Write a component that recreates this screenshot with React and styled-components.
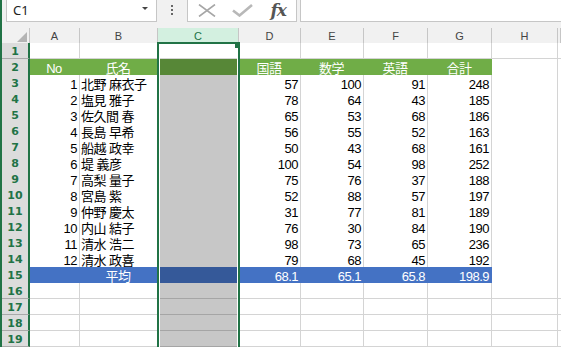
import React from 'react';
import styled, { createGlobalStyle } from 'styled-components';

const GlobalStyle = createGlobalStyle`
  html, body {
    margin: 0;
    padding: 0;
    background: #ffffff;
    overflow: hidden;
  }
`;

const GREEN = '#70ad47';
const BLUE = '#4472c4';
const EXCEL = '#217346';
const GRID = '#d4d4d4';
const CHROME = '#f1f1f1';

const columns = [
  { name: 'A', width: 50 },
  { name: 'B', width: 78 },
  { name: 'C', width: 81 },
  { name: 'D', width: 62 },
  { name: 'E', width: 63 },
  { name: 'F', width: 64 },
  { name: 'G', width: 64 },
  { name: 'H', width: 66 },
  { name: 'I', width: 0 },
];

const template = `28px ${columns
  .slice(0, -1)
  .map((c) => `${c.width}px`)
  .join(' ')} 1fr`;

const students = [
  [1, '北野 麻衣子', 57, 100, 91, 248],
  [2, '塩見 雅子', 78, 64, 43, 185],
  [3, '佐久間 春', 65, 53, 68, 186],
  [4, '長島 早希', 56, 55, 52, 163],
  [5, '船越 政幸', 50, 43, 68, 161],
  [6, '堤 義彦', 100, 54, 98, 252],
  [7, '高梨 量子', 75, 76, 37, 188],
  [8, '宮島 紫', 52, 88, 57, 197],
  [9, '仲野 慶太', 31, 77, 81, 189],
  [10, '内山 結子', 76, 30, 84, 190],
  [11, '清水 浩二', 98, 73, 65, 236],
  [12, '清水 政喜', 79, 68, 45, 192],
];

const Window = styled.div`
  height: 100vh;
  border-left: 2px solid ${EXCEL};
  display: flex;
  flex-direction: column;
  overflow: hidden;
  background: #fff;
`;

const FormulaBar = styled.div`
  display: flex;
  height: 22px;
  background: ${CHROME};
`;

const NameBox = styled.div`
  margin-left: 4px;
  width: 151px;
  height: 22px;
  box-sizing: border-box;
  border: 1px solid #c6c6c6;
  border-top: none;
  background: #fff;
  display: flex;
  justify-content: space-between;
  padding: 0 8px 0 6px;
  font-family: 'Noto Sans', sans-serif;
  font-size: 13px;
  line-height: 21px;
  color: #222;
`;

const DropArrow = styled.span`
  margin-top: 7px;
  width: 0;
  height: 0;
  border-left: 3px solid transparent;
  border-right: 3px solid transparent;
  border-top: 3px solid #444;
`;

const BarDots = styled.div`
  width: 30px;
  display: flex;
  flex-direction: column;
  align-items: center;
  gap: 2px;
  padding-top: 5px;
  box-sizing: border-box;

  span {
    width: 2px;
    height: 2px;
    background: #666;
  }
`;

const ButtonBox = styled.div`
  width: 110px;
  height: 22px;
  box-sizing: border-box;
  border: 1px solid #c6c6c6;
  border-top: none;
  background: #fff;
  display: flex;
  padding-left: 1px;
`;

const IconSlot = styled.div`
  width: 36px;
  display: flex;
  align-items: center;
  justify-content: center;
`;

const FxLabel = styled.span`
  font-family: 'DejaVu Serif', 'Liberation Serif', serif;
  font-style: italic;
  font-weight: bold;
  font-size: 17px;
  letter-spacing: -1px;
  color: #555;
  line-height: 21px;
  margin-top: -1px;
`;

const FormulaInput = styled.div`
  flex: 1;
  margin-left: 3px;
  height: 22px;
  box-sizing: border-box;
  border: 1px solid #c6c6c6;
  border-top: none;
  border-right: none;
  background: #fff;
`;

const Gap = styled.div`
  height: 10px;
  background: ${CHROME};
`;

const Sheet = styled.div`
  position: relative;
  flex: 1;
`;

const Row = styled.div`
  display: grid;
  grid-template-columns: ${template};
  height: ${(p) => p.$height || 16}px;
`;

const Corner = styled.div`
  background: ${CHROME};
  border-right: 1px solid #c6c6c6;
  border-bottom: 1px solid #bdbdbd;
  display: flex;
  align-items: flex-end;
  justify-content: flex-end;
  padding: 0 2px 2px 0;
`;

const ColHead = styled.div`
  box-sizing: border-box;
  background: ${(p) => (p.$active ? '#d3f0e0' : CHROME)};
  border-right: 1px solid #c6c6c6;
  border-bottom: ${(p) => (p.$active ? `2px solid ${EXCEL}` : '1px solid #bdbdbd')};
  color: ${(p) => (p.$active ? EXCEL : '#444')};
  font-family: 'Liberation Sans', Arial, sans-serif;
  font-size: 11px;
  line-height: 14px;
  padding-top: 1px;
  text-align: center;
`;

const RowHead = styled.div`
  box-sizing: border-box;
  background: #dcdcdc;
  border-right: 2px solid ${EXCEL};
  border-bottom: 1px solid #a9a9a9;
  color: ${EXCEL};
  font-family: 'DejaVu Sans', sans-serif;
  font-weight: bold;
  font-size: 11px;
  line-height: 12px;
  padding-top: 3px;
  text-align: center;
`;

const Cell = styled.div`
  position: relative;
  box-sizing: border-box;
  background: ${(p) => p.$fill || '#fff'};
  border-right: 1px solid ${(p) => p.$fill || GRID};
  border-bottom: 1px solid ${(p) => p.$fill || GRID};
  color: ${(p) => (p.$fill ? '#fff' : '#000')};
  font-family: 'Liberation Sans', 'Noto Sans CJK JP', sans-serif;
  font-size: 13px;
  letter-spacing: -0.5px;
  line-height: 13px;
  padding: 3px 2px 0 1px;
  text-align: ${(p) => p.$align || 'left'};
  white-space: nowrap;

  &::after {
    content: '';
    display: ${(p) => (p.$shade ? 'block' : 'none')};
    position: absolute;
    top: 0;
    left: 0;
    right: -1px;
    bottom: -1px;
    background: rgba(0, 0, 0, 0.22);
  }
`;

const Selection = styled.div`
  position: absolute;
  left: 155px;
  top: 14px;
  width: 83px;
  bottom: -20px;
  box-sizing: border-box;
  border: 2px solid ${EXCEL};
  box-shadow: inset 0 0 0 1px #fff;
  pointer-events: none;
`;

const FillHandle = styled.div`
  position: absolute;
  left: 76px;
  top: -1px;
  width: 5px;
  height: 5px;
  background: ${EXCEL};
`;

const CloseIcon = () => (
  <svg width="18" height="13" viewBox="0 0 18 13">
    <path d="M1 0.5 L17 12.5 M17 0.5 L1 12.5" stroke="#a6a6a6" strokeWidth="1.6" fill="none" />
  </svg>
);

const CheckIcon = () => (
  <svg width="21" height="13" viewBox="0 0 21 13">
    <path d="M1 6.5 L7.5 11.5 L20 1" stroke="#b8b8b8" strokeWidth="2.6" fill="none" />
  </svg>
);

const CornerTriangle = () => (
  <svg width="10" height="10" viewBox="0 0 10 10">
    <polygon points="10,0 10,10 0,10" fill="#b4b4b4" />
  </svg>
);

const DataRow = ({ index, cells }) => (
  <Row>
    <RowHead>{index}</RowHead>
    {cells.map((c, i) => (
      <Cell key={i} $align={c.align} $fill={c.fill} $shade={c.shade}>
        {c.text}
      </Cell>
    ))}
  </Row>
);

const blank = (n) => Array.from({ length: n }, () => ({}));

const buildRows = () => {
  const rows = [];
  rows.push(blank(9));
  rows.push([
    { text: 'No', align: 'center', fill: GREEN },
    { text: '氏名', align: 'center', fill: GREEN },
    { fill: GREEN },
    { text: '国語', align: 'center', fill: GREEN },
    { text: '数学', align: 'center', fill: GREEN },
    { text: '英語', align: 'center', fill: GREEN },
    { text: '合計', align: 'center', fill: GREEN },
    {},
    {},
  ]);
  students.forEach(([no, name, a, b, c, total]) => {
    rows.push([
      { text: no, align: 'right' },
      { text: name },
      {},
      { text: a, align: 'right' },
      { text: b, align: 'right' },
      { text: c, align: 'right' },
      { text: total, align: 'right' },
      {},
      {},
    ]);
  });
  rows.push([
    { fill: BLUE },
    { text: '平均', align: 'center', fill: BLUE },
    { fill: BLUE },
    { text: '68.1', align: 'right', fill: BLUE },
    { text: '65.1', align: 'right', fill: BLUE },
    { text: '65.8', align: 'right', fill: BLUE },
    { text: '198.9', align: 'right', fill: BLUE },
    {},
    {},
  ]);
  for (let i = 0; i < 4; i++) rows.push(blank(9));
  // column C is selected: every cell but the active one is shaded
  return rows.map((r, i) => r.map((c, j) => (j === 2 && i > 0 ? { ...c, shade: true } : c)));
};

const App = () => {
  const rows = buildRows();
  return (
    <>
      <GlobalStyle />
      <Window>
        <FormulaBar>
          <NameBox>
            C1
            <DropArrow />
          </NameBox>
          <BarDots>
            <span />
            <span />
            <span />
          </BarDots>
          <ButtonBox>
            <IconSlot>
              <CloseIcon />
            </IconSlot>
            <IconSlot>
              <CheckIcon />
            </IconSlot>
            <IconSlot>
              <FxLabel>fx</FxLabel>
            </IconSlot>
          </ButtonBox>
          <FormulaInput />
        </FormulaBar>
        <Gap />
        <Sheet>
          <Row $height={15}>
            <Corner>
              <CornerTriangle />
            </Corner>
            {columns.map((c) => (
              <ColHead key={c.name} $active={c.name === 'C'}>
                {c.name === 'I' ? '' : c.name}
              </ColHead>
            ))}
          </Row>
          {rows.map((cells, i) => (
            <DataRow key={i} index={i + 1} cells={cells} />
          ))}
          <Selection>
            <FillHandle />
          </Selection>
        </Sheet>
      </Window>
    </>
  );
};

export default App;
